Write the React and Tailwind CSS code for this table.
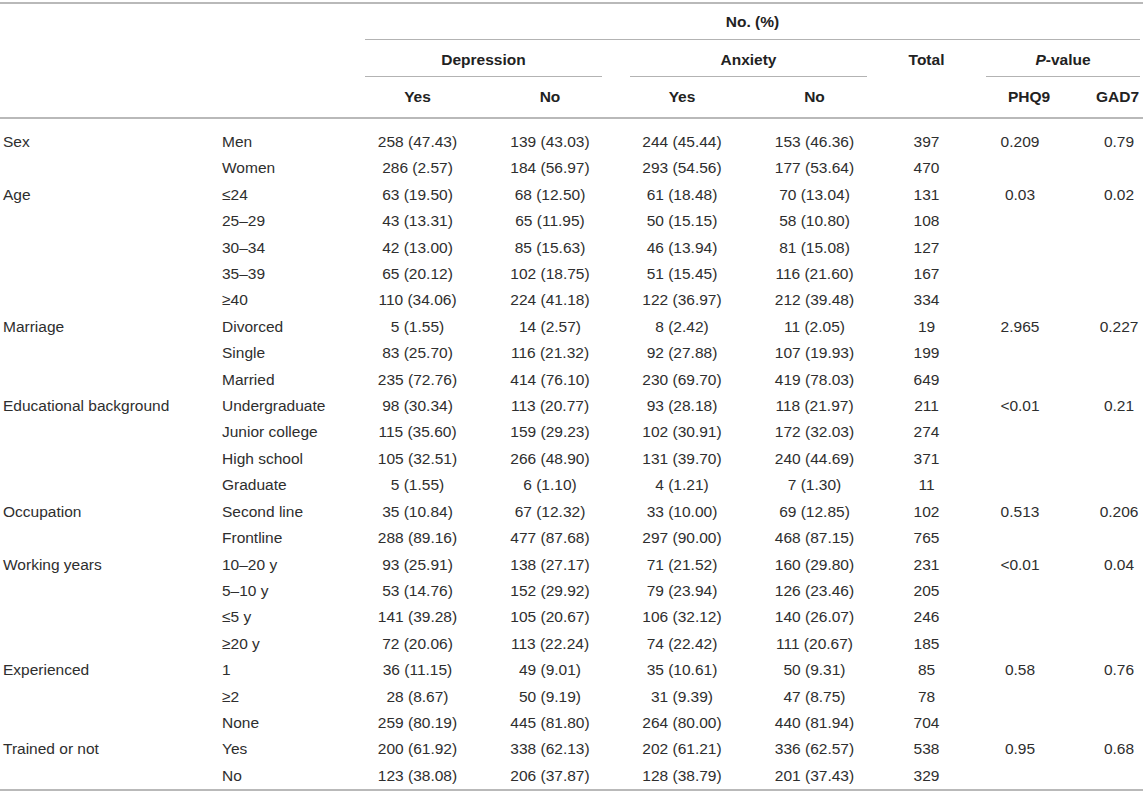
const groups = [
  {
    label: "Sex",
    p: ["0.209", "0.79"],
    rows: [
      ["Men", "258 (47.43)", "139 (43.03)", "244 (45.44)", "153 (46.36)", "397"],
      ["Women", "286 (2.57)", "184 (56.97)", "293 (54.56)", "177 (53.64)", "470"],
    ],
  },
  {
    label: "Age",
    p: ["0.03", "0.02"],
    rows: [
      ["≤24", "63 (19.50)", "68 (12.50)", "61 (18.48)", "70 (13.04)", "131"],
      ["25–29", "43 (13.31)", "65 (11.95)", "50 (15.15)", "58 (10.80)", "108"],
      ["30–34", "42 (13.00)", "85 (15.63)", "46 (13.94)", "81 (15.08)", "127"],
      ["35–39", "65 (20.12)", "102 (18.75)", "51 (15.45)", "116 (21.60)", "167"],
      ["≥40", "110 (34.06)", "224 (41.18)", "122 (36.97)", "212 (39.48)", "334"],
    ],
  },
  {
    label: "Marriage",
    p: ["2.965", "0.227"],
    rows: [
      ["Divorced", "5 (1.55)", "14 (2.57)", "8 (2.42)", "11 (2.05)", "19"],
      ["Single", "83 (25.70)", "116 (21.32)", "92 (27.88)", "107 (19.93)", "199"],
      ["Married", "235 (72.76)", "414 (76.10)", "230 (69.70)", "419 (78.03)", "649"],
    ],
  },
  {
    label: "Educational background",
    p: ["<0.01", "0.21"],
    rows: [
      ["Undergraduate", "98 (30.34)", "113 (20.77)", "93 (28.18)", "118 (21.97)", "211"],
      ["Junior college", "115 (35.60)", "159 (29.23)", "102 (30.91)", "172 (32.03)", "274"],
      ["High school", "105 (32.51)", "266 (48.90)", "131 (39.70)", "240 (44.69)", "371"],
      ["Graduate", "5 (1.55)", "6 (1.10)", "4 (1.21)", "7 (1.30)", "11"],
    ],
  },
  {
    label: "Occupation",
    p: ["0.513", "0.206"],
    rows: [
      ["Second line", "35 (10.84)", "67 (12.32)", "33 (10.00)", "69 (12.85)", "102"],
      ["Frontline", "288 (89.16)", "477 (87.68)", "297 (90.00)", "468 (87.15)", "765"],
    ],
  },
  {
    label: "Working years",
    p: ["<0.01", "0.04"],
    rows: [
      ["10–20 y", "93 (25.91)", "138 (27.17)", "71 (21.52)", "160 (29.80)", "231"],
      ["5–10 y", "53 (14.76)", "152 (29.92)", "79 (23.94)", "126 (23.46)", "205"],
      ["≤5 y", "141 (39.28)", "105 (20.67)", "106 (32.12)", "140 (26.07)", "246"],
      ["≥20 y", "72 (20.06)", "113 (22.24)", "74 (22.42)", "111 (20.67)", "185"],
    ],
  },
  {
    label: "Experienced",
    p: ["0.58", "0.76"],
    rows: [
      ["1", "36 (11.15)", "49 (9.01)", "35 (10.61)", "50 (9.31)", "85"],
      ["≥2", "28 (8.67)", "50 (9.19)", "31 (9.39)", "47 (8.75)", "78"],
      ["None", "259 (80.19)", "445 (81.80)", "264 (80.00)", "440 (81.94)", "704"],
    ],
  },
  {
    label: "Trained or not",
    p: ["0.95", "0.68"],
    rows: [
      ["Yes", "200 (61.92)", "338 (62.13)", "202 (61.21)", "336 (62.57)", "538"],
      ["No", "123 (38.08)", "206 (37.87)", "128 (38.79)", "201 (37.43)", "329"],
    ],
  },
];

export default function App() {
  return (
    <div className="bg-white w-[1143px] h-[799px] pt-[2px] font-['Liberation_Sans',Arial,sans-serif] text-[15.5px] text-[#2e2e2e]">
      <div className="border-y-2 border-[#b9b9b9]">
        <table className="w-[1143px] table-fixed border-separate border-spacing-0">
          <colgroup>
            <col className="w-[219px]" />
            <col className="w-[132px]" />
            <col className="w-[133px]" />
            <col className="w-[132px]" />
            <col className="w-[132px]" />
            <col className="w-[133px]" />
            <col className="w-[91px]" />
            <col className="w-[96px]" />
            <col className="w-[75px]" />
          </colgroup>
          <thead className="font-bold text-[#222]">
            <tr>
              <th rowSpan={3} className="border-b-2 border-[#b9b9b9] p-0"></th>
              <th rowSpan={3} className="border-b-2 border-[#b9b9b9] p-0"></th>
              <th colSpan={7} className="p-0 align-bottom">
                <div className="h-[36px] ml-[14px] mr-[3px] flex items-center justify-center border-b border-[#b3b3b3]">
                  No. (%)
                </div>
              </th>
            </tr>
            <tr>
              <th colSpan={2} className="p-0 align-bottom">
                <div className="h-[37px] mx-[14px] pt-[3px] flex items-center justify-center border-b border-[#b3b3b3]">
                  Depression
                </div>
              </th>
              <th colSpan={2} className="p-0 align-bottom">
                <div className="h-[37px] mx-[14px] pt-[3px] flex items-center justify-center border-b border-[#b3b3b3]">
                  Anxiety
                </div>
              </th>
              <th rowSpan={2} className="p-0 align-top border-b-2 border-[#b9b9b9]">
                <div className="h-[37px] pt-[3px] flex items-center justify-center">Total</div>
              </th>
              <th colSpan={2} className="p-0 align-bottom">
                <div className="h-[37px] ml-[14px] mr-[3px] pt-[3px] flex items-center justify-center border-b border-[#b3b3b3]">
                  <span>
                    <i>P</i>-value
                  </span>
                </div>
              </th>
            </tr>
            <tr>
              {["Yes", "No", "Yes", "No"].map((t, i) => (
                <th key={i} className="p-0 border-b-2 border-[#b9b9b9]">
                  <div className="h-[40px] flex items-center justify-center">{t}</div>
                </th>
              ))}
              <th className="p-0 border-b-2 border-[#b9b9b9]">
                <div className="h-[40px] pl-[18px] flex items-center justify-center">PHQ9</div>
              </th>
              <th className="p-0 border-b-2 border-[#b9b9b9]">
                <div className="h-[40px] pl-[24px] flex items-center justify-center">GAD7</div>
              </th>
            </tr>
          </thead>
          <tbody className="leading-[26.4px]">
            <tr className="h-[10px]">
              <td colSpan={9} className="p-0"></td>
            </tr>
            {groups.map((g) =>
              g.rows.map((r, i) => (
                <tr key={g.label + i}>
                  <td className="p-0 pl-[3px] whitespace-nowrap">{i === 0 ? g.label : ""}</td>
                  <td className="p-0 pl-[3px] whitespace-nowrap">{r[0]}</td>
                  <td className="p-0 text-center">{r[1]}</td>
                  <td className="p-0 text-center">{r[2]}</td>
                  <td className="p-0 text-center">{r[3]}</td>
                  <td className="p-0 text-center">{r[4]}</td>
                  <td className="p-0 text-center">{r[5]}</td>
                  <td className="p-0 text-center">{i === 0 ? g.p[0] : ""}</td>
                  <td className="p-0 pl-[27px] text-center">{i === 0 ? g.p[1] : ""}</td>
                </tr>
              ))
            )}
          </tbody>
        </table>
      </div>
    </div>
  );
}
